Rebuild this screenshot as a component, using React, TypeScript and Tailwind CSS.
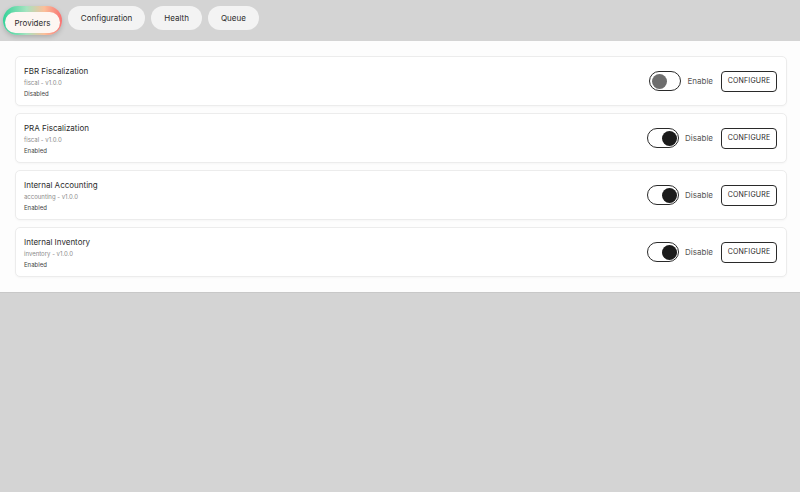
import React, { useState } from "react";

type Provider = {
  id: string;
  name: string;
  slug: string;
  version: string;
  enabled: boolean;
};

const initialProviders: Provider[] = [
  { id: "fbr", name: "FBR Fiscalization", slug: "fiscal", version: "v1.0.0", enabled: false },
  { id: "pra", name: "PRA Fiscalization", slug: "fiscal", version: "v1.0.0", enabled: true },
  { id: "acc", name: "Internal Accounting", slug: "accounting", version: "v1.0.0", enabled: true },
  { id: "inv", name: "Internal Inventory", slug: "inventory", version: "v1.0.0", enabled: true },
];

const tabs = ["Providers", "Configuration", "Health", "Queue"];

function Toggle({ on, onClick }: { on: boolean; onClick: () => void }) {
  return (
    <button
      onClick={onClick}
      className={`flex h-[20px] w-[32px] items-center rounded-full border-[1.5px] border-[#2a2a2a] bg-white px-[1.5px] ${
        on ? "justify-end" : "justify-start"
      }`}
    >
      <span
        className={`block h-[15px] w-[15px] rounded-full ${on ? "bg-[#1b1b1b]" : "bg-[#6e6e6e]"}`}
      />
    </button>
  );
}

function ProviderCard({
  provider,
  onToggle,
}: {
  provider: Provider;
  onToggle: (id: string) => void;
}) {
  return (
    <div className="flex h-[50px] items-center justify-between rounded-[5px] border border-[#ececec] bg-white pl-[8px] pr-[9px] shadow-[0_1px_2px_rgba(0,0,0,0.03)]">
      <div className="flex flex-col">
        <span className="text-[8px] leading-[12px] text-[#2b2b2b]">{provider.name}</span>
        <span className="mt-[1px] text-[6px] leading-[9px] text-[#8a8a8a]">
          {provider.slug} - {provider.version}
        </span>
        <span className="mt-[2px] text-[6px] leading-[9px] text-[#444]">
          {provider.enabled ? "Enabled" : "Disabled"}
        </span>
      </div>

      <div className="flex items-center">
        <Toggle on={provider.enabled} onClick={() => onToggle(provider.id)} />
        <span className="ml-[6px] text-[8px] text-[#555]">
          {provider.enabled ? "Disable" : "Enable"}
        </span>
        <button className="ml-[8px] h-[21px] w-[56px] rounded-[4px] border border-[#2a2a2a] bg-white text-[7px] tracking-[0.2px] text-[#1f1f1f]">
          CONFIGURE
        </button>
      </div>
    </div>
  );
}

export default function App() {
  const [active, setActive] = useState("Providers");
  const [providers, setProviders] = useState(initialProviders);

  const toggle = (id: string) =>
    setProviders((list) => list.map((p) => (p.id === id ? { ...p, enabled: !p.enabled } : p)));

  return (
    <div className="min-h-[492px] w-full bg-[#d4d4d4] font-['Inter',sans-serif]">
      {/* Tab bar */}
      <div className="flex h-[41px] items-start gap-[6px] pl-[3px] pt-[6px]">
        {tabs.map((tab) =>
          tab === active ? (
            <div
              key={tab}
              className="rounded-full bg-[linear-gradient(90deg,#34d399,#a7e3c0_40%,#fbbf9a_70%,#f87171)] p-[1.5px] shadow-[0_2px_5px_rgba(0,0,0,0.18)]"
            >
              <button
                onClick={() => setActive(tab)}
                className="h-[21px] rounded-full bg-[#fdf6f2] px-[10px] text-[8px] text-[#2b2b2b]"
              >
                {tab}
              </button>
            </div>
          ) : (
            <button
              key={tab}
              onClick={() => setActive(tab)}
              className="h-[24px] rounded-full bg-[#f3f3f3] px-[13px] text-[8px] text-[#2b2b2b]"
            >
              {tab}
            </button>
          )
        )}
      </div>

      {/* Provider list */}
      <div className="flex flex-col gap-[7px] border-b border-[#c8c8c8] bg-[#fdfdfd] px-[15px] pb-[15px] pt-[15px] pr-[13px]">
        {providers.map((p) => (
          <ProviderCard key={p.id} provider={p} onToggle={toggle} />
        ))}
      </div>
    </div>
  );
}
